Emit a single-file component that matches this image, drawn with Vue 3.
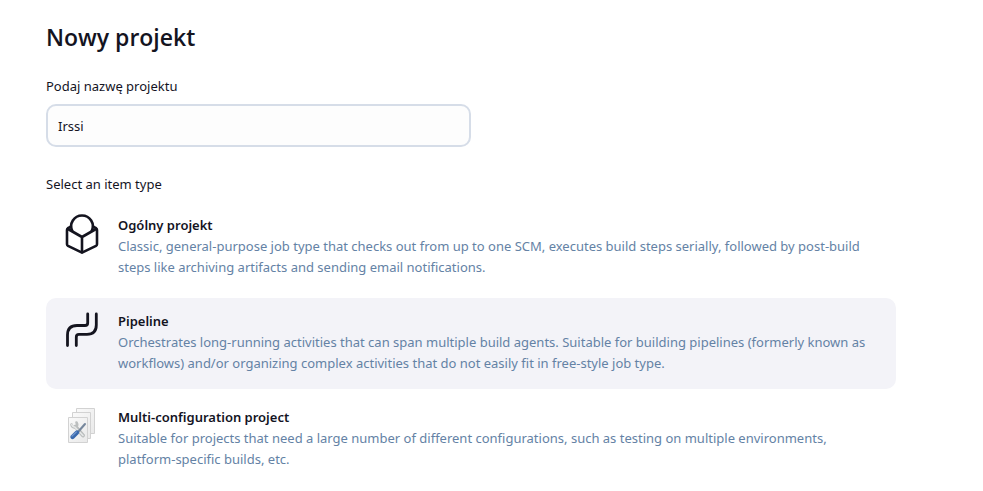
<script setup>
import { ref } from 'vue'

const name = ref('Irssi')
const selected = ref('pipeline')
const items = [
  { id: 'freestyle', title: 'Ogólny projekt', text: 'Classic, general-purpose job type that checks out from up to one SCM, executes build steps serially, followed by post-build steps like archiving artifacts and sending email notifications.' },
  { id: 'pipeline', title: 'Pipeline', text: 'Orchestrates long-running activities that can span multiple build agents. Suitable for building pipelines (formerly known as workflows) and/or organizing complex activities that do not easily fit in free-style job type.' },
  { id: 'matrix', title: 'Multi-configuration project', text: 'Suitable for projects that need a large number of different configurations, such as testing on multiple environments, platform-specific builds, etc.' },
]
</script>

<template>
  <main class="page">
    <h1>Nowy projekt</h1>
    <label class="caption" for="name">Podaj nazwę projektu</label>
    <input id="name" v-model="name" class="name" type="text" />
    <fieldset class="types">
      <legend class="caption">Select an item type</legend>
      <label v-for="item in items" :key="item.id" class="item" :class="{ chosen: selected === item.id }">
        <input v-model="selected" class="radio" type="radio" name="type" :value="item.id" />
        <span class="icon">
          <svg v-if="item.id === 'freestyle'" viewBox="0 0 40 40" fill="none" stroke="#14141f" stroke-width="2.6" stroke-linejoin="round" stroke-linecap="round">
            <path d="M10.300 17A10.800 10.800 0 1 1 29.700 17" />
            <path d="M8.800 12.700L5.900 14.200Q5 14.900 5 16V30.200Q5 31.200 6 31.800L20 38.700L34 31.800Q35 31.200 35 30.200V16Q35 14.900 34.100 14.200L31.200 12.700" />
            <path d="M6 15L20 23L34 15M20 23V38" />
          </svg>
          <svg v-else-if="item.id === 'pipeline'" viewBox="0 0 40 40" fill="none" stroke="#14141f" stroke-width="2.8" stroke-linejoin="round" stroke-linecap="round">
            <path d="M5.500 35.500V25Q5.500 15.500 15 15.500H23Q25.700 15.500 25.700 13V4" />
            <path d="M14.300 35.500V27Q14.300 24.300 17 24.300H25Q34.300 24.300 34.300 15V4" />
          </svg>
          <svg v-else viewBox="0 0 40 40">
            <defs>
              <linearGradient id="sheet" x1="0" y1="0" x2="1" y2="1">
                <stop offset="0" stop-color="#fafafa" />
                <stop offset="1" stop-color="#e9e9e9" />
              </linearGradient>
            </defs>
            <g fill="url(#sheet)" stroke="#d2d2d2">
              <path d="M14.500 2.500H32.500V27.500H14.500Z" />
              <path d="M10.500 6.500H28.500V32.500H10.500Z" />
              <path d="M6.500 11.500H25.500V36.500H6.500Z" />
            </g>
            <path d="M13.500 20.500L21 29.500" stroke="#b9bcbc" stroke-width="3.8" stroke-linecap="round" />
            <path d="M9.500 18.500Q10 21.500 13 21.500Q16.500 20 14.500 16.500" fill="none" stroke="#bcbfbf" stroke-width="2.600" stroke-linecap="round" />
            <path d="M9.800 18.800Q10.500 21 13 21.200L21 29.500" fill="none" stroke="#e6e8e8" stroke-width="1.600" stroke-linecap="round" />
            <path d="M23 18L16 26" stroke="#76879c" stroke-width="2" stroke-linecap="round" />
            <path d="M15 26.500L10.500 31" stroke="#3a69ad" stroke-width="4.400" stroke-linecap="round" />
            <path d="M14.300 26L10 30" stroke="#7096cd" stroke-width="1.200" stroke-linecap="round" />
          </svg>
        </span>
        <span class="body">
          <span class="title">{{ item.title }}</span>
          <span class="desc">{{ item.text }}</span>
        </span>
      </label>
    </fieldset>
  </main>
</template>

<style>
body { margin: 0; background: #fff; }
</style>

<style scoped>
.page { box-sizing: border-box; max-width: 942px; padding: 21px 46px 12px; font-family: "Noto Sans", "Open Sans", sans-serif; font-size: 13px; line-height: 21px; color: #14141f; }
h1 { margin: 0 0 22px; font-family: "Open Sans", sans-serif; font-size: 23px; line-height: 33px; font-weight: 600; }
.caption { display: block; padding: 0; }
.name { box-sizing: border-box; display: block; width: 50%; height: 43px; margin: 7px 0 27px; padding: 0 10px; border: 2px solid #d6dde8; border-radius: 10px; background: #fdfdfd; font: inherit; color: inherit; outline: none; }
.types { margin: 0; padding: 0; border: 0; min-width: 0; }
.types .caption { margin-bottom: 2px; }
.item { position: relative; display: flex; gap: 16px; padding: 12px 16px 15px; margin-top: 5px; border-radius: 10px; cursor: pointer; }
.item.chosen { background: #f3f3f8; }
.radio { position: absolute; opacity: 0; }
.icon { flex: none; width: 40px; height: 40px; }
.icon svg { display: block; width: 40px; height: 40px; }
.body { min-width: 0; padding-top: 1px; }
.title { display: block; font-weight: 600; }
.desc { display: block; color: #6482a5; }
</style>
